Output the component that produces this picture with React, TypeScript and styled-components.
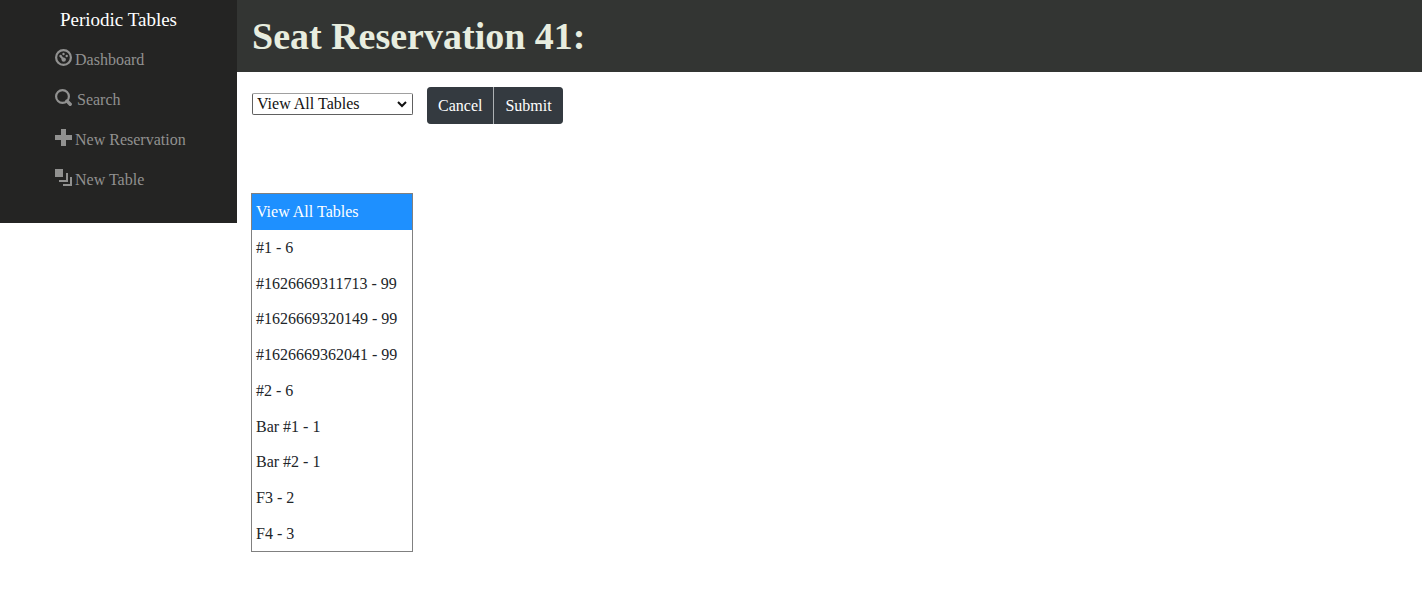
import React, { useState } from "react";
import styled, { createGlobalStyle } from "styled-components";

const GlobalStyle = createGlobalStyle`
  *, *::before, *::after { box-sizing: border-box; }
  body {
    margin: 0;
    background: #fff;
    color: #212529;
    font-family: "Liberation Serif", "Times New Roman", serif;
    font-size: 16px;
    line-height: 24px;
  }
`;

const Layout = styled.div`
  display: grid;
  grid-template-columns: 1fr 5fr;
  align-items: start;
`;

const Sidebar = styled.nav`
  padding-bottom: 31px;
  background: #242423;
`;

const Brand = styled.a`
  display: block;
  padding: 8px 0;
  color: #fff;
  font-size: 19px;
  line-height: 24px;
  text-align: center;
  text-decoration: none;
`;

const NavList = styled.ul`
  display: grid;
  grid-auto-rows: 24px;
  row-gap: 16px;
  margin: 0;
  padding: 8px 0 0 55px;
  list-style: none;
`;

const NavLink = styled.a<{ $gap?: number }>`
  display: flex;
  gap: ${({ $gap = 3 }) => $gap}px;
  color: #919190;
  font-size: 16px;
  white-space: nowrap;
  text-decoration: none;
`;

const Icon = styled.svg`
  flex: none;
  width: 17px;
  height: 17px;
  margin-top: 1px;
  fill: currentColor;
`;

const Main = styled.main`
  min-width: 0;
`;

const Header = styled.header`
  padding: 12px 15px;
  background: #333533;
`;

const Title = styled.h1`
  margin: 0;
  color: #e8eddf;
  font-size: 38px;
  font-weight: 700;
  line-height: 48px;
`;

const Form = styled.form`
  display: flex;
  align-items: flex-start;
  gap: 14px;
  padding: 15px 15px 0;
`;

const SelectBox = styled.div`
  position: relative;
  width: 161px;
  margin-top: 6px;
`;

const TableSelect = styled.select`
  display: block;
  width: 100%;
  height: 22px;
  margin: 0;
  padding: 0 4px;
  appearance: none;
  border: 1px solid #606060;
  border-top-color: #a0a0a0;
  border-radius: 2px;
  background: #fff;
  color: #111;
  font: inherit;
  line-height: 20px;
`;

const Chevron = styled.svg`
  position: absolute;
  top: 8px;
  right: 6px;
  width: 10px;
  height: 7px;
  fill: none;
  stroke: #111;
  stroke-width: 2;
  pointer-events: none;
`;

const ButtonGroup = styled.div`
  display: flex;
  gap: 1px;
  border-radius: 4px;
  overflow: hidden;
  background: #adb1b4;
`;

const Button = styled.button`
  padding: 6px 11px;
  border: 0;
  background: #343a40;
  color: #fff;
  font: inherit;
  line-height: 25px;
`;

const Options = styled.ul`
  display: grid;
  grid-auto-rows: 1fr;
  width: 162px;
  height: 359px;
  margin: 69px 0 0 14px;
  padding: 0;
  border: 1px solid #808080;
  list-style: none;
`;

const Option = styled.button<{ $active: boolean }>`
  display: block;
  width: 100%;
  height: 100%;
  padding: 1px 4px 0;
  border: 0;
  background: ${({ $active }) => ($active ? "#1e90ff" : "#fff")};
  color: ${({ $active }) => ($active ? "#fff" : "#212529")};
  font: inherit;
  text-align: left;
  white-space: nowrap;
`;

const links = [
  {
    label: "Dashboard",
    icon: (
      <>
        <circle cx="8.5" cy="8.5" r="7.4" fill="none" stroke="currentColor" strokeWidth="2.2" />
        <circle cx="8.5" cy="5" r="1.2" />
        <circle cx="11.7" cy="7" r="1.2" />
        <circle cx="5.5" cy="7" r="1.2" />
        <path d="M5.5 7l3 3.5" stroke="currentColor" strokeWidth="2" />
        <circle cx="8.7" cy="10.6" r="2.2" />
      </>
    ),
  },
  {
    label: "Search",
    gap: 5,
    icon: (
      <g fill="none" stroke="currentColor">
        <circle cx="7.5" cy="7.5" r="6.4" strokeWidth="2.2" />
        <path d="M12 12l3.2 3.2" strokeWidth="3.4" strokeLinecap="round" />
      </g>
    ),
  },
  {
    label: "New Reservation",
    icon: <path d="M6 0h5v6h6v5h-6v6h-5v-6h-6v-5h6z" />,
  },
  {
    label: "New Table",
    icon: <path d="M0 0h8v8h-8zM11 4h2v9h-9v-2h7zM15 8h2v9h-9v-2h7z" />,
  },
];

const tables = [
  "View All Tables",
  "#1 - 6",
  "#1626669311713 - 99",
  "#1626669320149 - 99",
  "#1626669362041 - 99",
  "#2 - 6",
  "Bar #1 - 1",
  "Bar #2 - 1",
  "F3 - 2",
  "F4 - 3",
];

export default function App() {
  const [selected, setSelected] = useState(tables[0]);

  return (
    <>
      <GlobalStyle />
      <Layout>
        <Sidebar>
          <Brand href="#">Periodic Tables</Brand>
          <NavList>
            {links.map(({ label, icon, gap }) => (
              <li key={label}>
                <NavLink href="#" $gap={gap}>
                  <Icon viewBox="0 0 17 17" aria-hidden="true">
                    {icon}
                  </Icon>
                  <span>{label}</span>
                </NavLink>
              </li>
            ))}
          </NavList>
        </Sidebar>
        <Main>
          <Header>
            <Title>Seat Reservation 41:</Title>
          </Header>
          <Form onSubmit={(e) => e.preventDefault()}>
            <SelectBox>
              <TableSelect
                aria-label="Table"
                value={selected}
                onChange={(e) => setSelected(e.target.value)}
              >
                {tables.map((t) => (
                  <option key={t}>{t}</option>
                ))}
              </TableSelect>
              <Chevron viewBox="0 0 10 7" aria-hidden="true">
                <path d="M1 1l4 4 4-4" />
              </Chevron>
            </SelectBox>
            <ButtonGroup>
              <Button type="button">Cancel</Button>
              <Button type="submit">Submit</Button>
            </ButtonGroup>
          </Form>
          <Options>
            {tables.map((t) => (
              <li key={t}>
                <Option
                  type="button"
                  $active={t === selected}
                  onClick={() => setSelected(t)}
                >
                  {t}
                </Option>
              </li>
            ))}
          </Options>
        </Main>
      </Layout>
    </>
  );
}
